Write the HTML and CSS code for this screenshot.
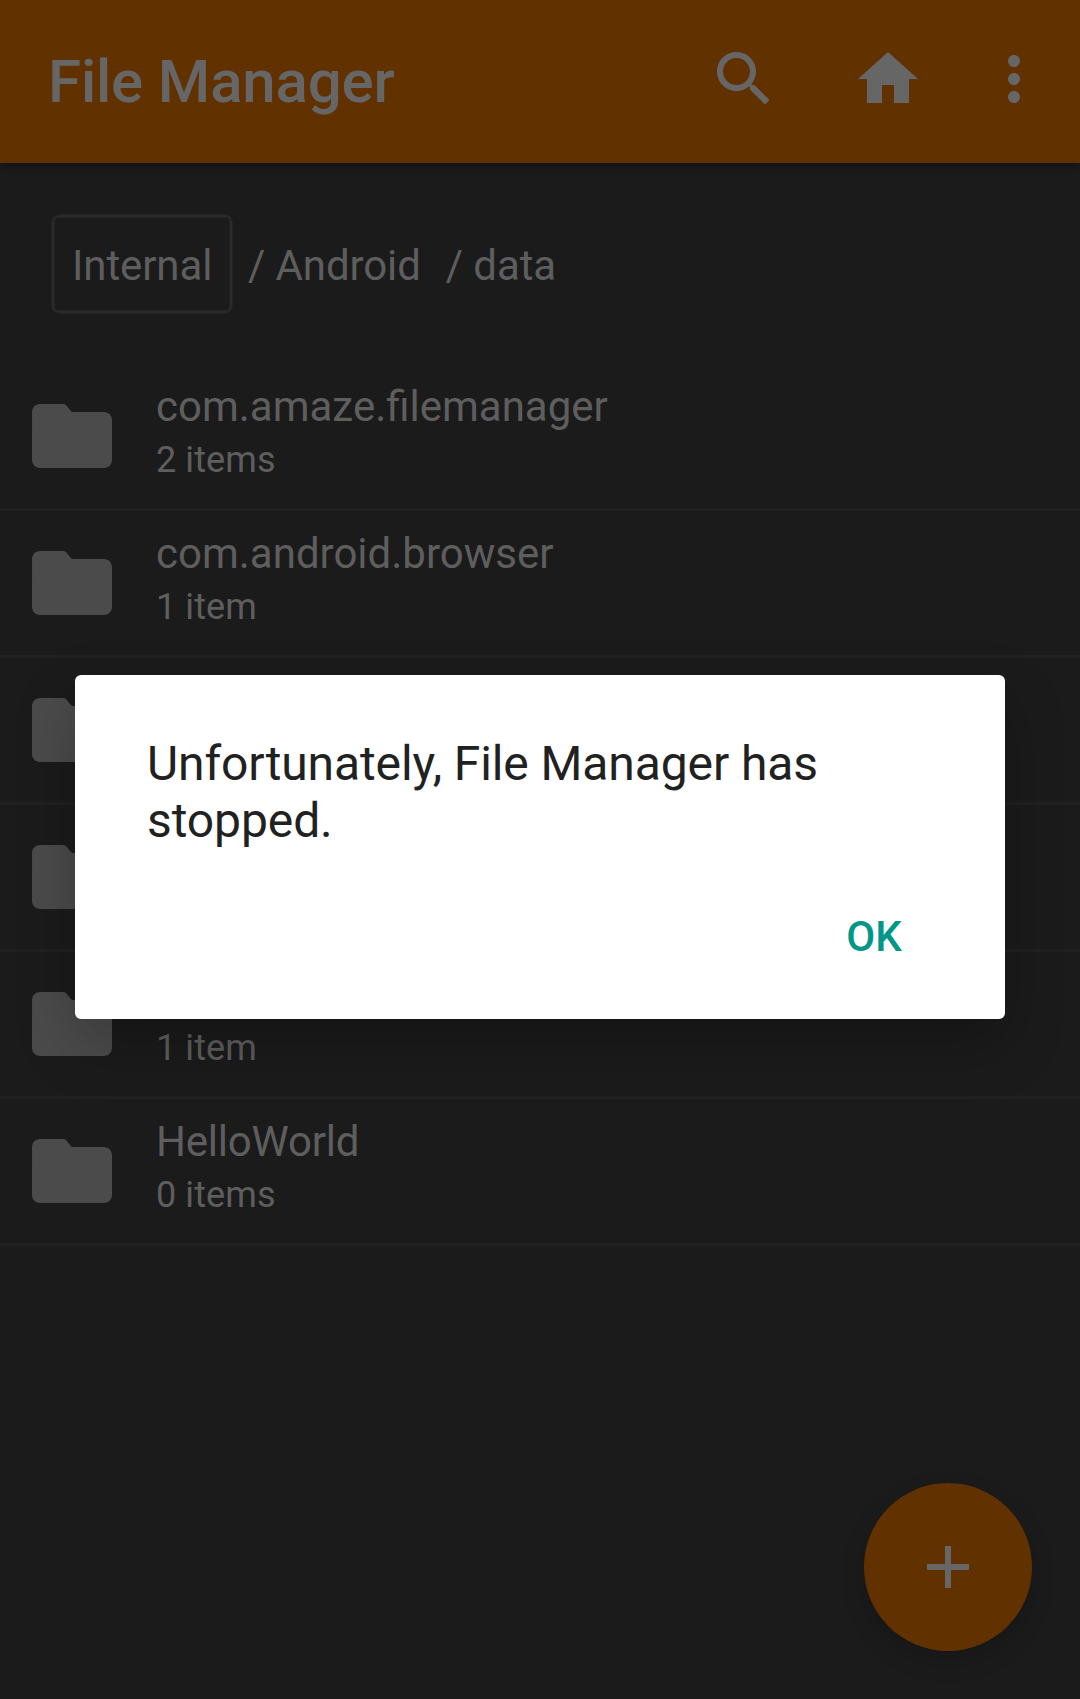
FILE: index.html
```html
<!DOCTYPE html>
<html lang="en">
<head>
<meta charset="utf-8">
<title>File Manager</title>
<link rel="stylesheet" href="styles.css">
</head>
<body>
<svg class="defs" aria-hidden="true">
  <symbol id="folder" viewBox="0 0 24 24"><path d="M10 4H4c-1.1 0-1.990.9-1.990 2L2 18c0 1.100.9 2 2 2h16c1.100 0 2-.9 2-2V8c0-1.100-.9-2-2-2h-8l-.5-.5L10.700 4.500Q10.300 4 10 4z"/></symbol>
</svg>
<div class="screen">
  <header class="toolbar">
    <h1 class="toolbar-title">File Manager</h1>
    <svg class="icon icon-search" viewBox="0 0 24 24"><path d="M15.500 14h-.79l-.28-.27C15.410 12.590 16 11.110 16 9.500 16 5.910 13.090 3 9.500 3S3 5.910 3 9.500 5.910 16 9.500 16c1.610 0 3.090-.59 4.230-1.570l.27.28v.79l5 4.990L20.490 19l-4.990-5zm-6 0C7.010 14 5 11.990 5 9.500S7.010 5 9.500 5 14 7.010 14 9.500 11.990 14 9.500 14z"/></svg>
    <svg class="icon icon-home" viewBox="0 0 24 24"><path d="M10 20v-6h4v6h5v-8h3L12 3 2 12h3v8z"/></svg>
    <svg class="icon" viewBox="0 0 24 24"><path d="M12 8c1.100 0 2-.9 2-2s-.9-2-2-2-2 .9-2 2 .9 2 2 2zm0 2c-1.100 0-2 .9-2 2s.9 2 2 2 2-.9 2-2-.9-2-2-2zm0 6c-1.100 0-2 .9-2 2s.9 2 2 2 2-.9 2-2-.9-2-2-2z"/></svg>
  </header>
  <nav class="path">
    <span class="path-root">Internal</span>
    <span class="path-part">/ Android</span>
    <span class="path-part">/ data</span>
  </nav>
  <ul class="files">
    <li class="file"><svg class="folder"><use href="#folder"/></svg><div><p class="name">com.amaze.filemanager</p><p class="count">2 items</p></div></li>
    <li class="file"><svg class="folder"><use href="#folder"/></svg><div><p class="name">com.android.browser</p><p class="count">1 item</p></div></li>
    <li class="file"><svg class="folder"><use href="#folder"/></svg></li>
    <li class="file"><svg class="folder"><use href="#folder"/></svg></li>
    <li class="file"><svg class="folder"><use href="#folder"/></svg><div><p class="name"></p><p class="count">1 item</p></div></li>
    <li class="file"><svg class="folder"><use href="#folder"/></svg><div><p class="name name-tight">HelloWorld</p><p class="count">0 items</p></div></li>
  </ul>
  <button class="fab" aria-label="Add"><svg class="icon" viewBox="0 0 24 24"><path d="M19 13h-6v6h-2v-6H5v-2h6V5h2v6h6v2z"/></svg></button>
  <section class="dialog" role="alertdialog">
    <p class="message">Unfortunately, File Manager has stopped.</p>
    <button class="ok">OK</button>
  </section>
</div>
</body>
</html>
```
FILE: styles.css
```css
* { box-sizing: border-box; }
body { margin: 0; background: #1b1b1b; font-family: Roboto, sans-serif; }
h1, p, ul { margin: 0; padding: 0; font-weight: 400; }
button { border: 0; padding: 0; font-family: inherit; background: none; }
.defs { display: none; }

.screen {
  position: relative;
  width: 1080px;
  height: 1699px;
  overflow: hidden;
  color: #5e5e5e;
}

.toolbar {
  display: flex;
  align-items: center;
  height: 163px;
  padding: 0 30px 5px 48px;
  background: #623100;
  color: #666;
  box-shadow: 0 3px 8px rgba(0, 0, 0, .35);
}
.toolbar-title {
  flex: 1;
  padding-top: 5px;
  font-size: 60px;
  font-weight: 500;
  line-height: 70px;
  letter-spacing: -.17px;
}
.icon { display: block; width: 72px; height: 72px; fill: #666; }
.icon-search { margin-right: 72px; }
.icon-home { margin-right: 54px; }

.path {
  display: flex;
  align-items: center;
  height: 201px;
  padding-left: 52px;
  font-size: 42px;
  line-height: 50px;
  letter-spacing: -.1px;
  white-space: nowrap;
}
.path-root {
  width: 180px;
  height: 98px;
  padding: 24px 0 0 18px;
  border: 2px solid #2b2b2b;
  border-radius: 7px;
  box-shadow: 0 0 1px 1px #232323, inset 0 0 1px 1px #232323;
}
.path-part { padding: 4px 0 0; margin-left: 16px; }
.path-part + .path-part { margin-left: 25px; }

.files { list-style: none; }
.file {
  display: flex;
  gap: 36px;
  height: 147px;
  padding: 24px 0 0 24px;
  border-bottom: 3px solid #212121;
}
.folder { width: 96px; height: 96px; fill: #4b4b4b; }
.name { height: 49px; margin-top: -6px; font-size: 42px; line-height: 49px; }
.name-tight { letter-spacing: -.2px; }
.count { font-size: 36px; line-height: 42px; margin-top: 8px; letter-spacing: .1px; }

.fab {
  position: absolute;
  left: 864px;
  top: 1483px;
  display: grid;
  place-items: center;
  width: 168px;
  height: 168px;
  border-radius: 50%;
  background: #623100;
  box-shadow: 0 10px 24px rgba(0, 0, 0, .16);
}

.dialog {
  position: absolute;
  left: 75px;
  top: 675px;
  display: flex;
  flex-direction: column;
  align-items: flex-end;
  width: 930px;
  height: 344px;
  padding: 60px 72px 0;
  border-radius: 6px;
  background: #fff;
  box-shadow: 0 24px 60px rgba(0, 0, 0, .24);
}
.message { width: 100%; color: #212121; font-size: 48px; line-height: 57px; letter-spacing: -.1px; }
.ok {
  width: 120px;
  margin: 63px -1px 0 0;
  color: #009688;
  font-size: 42px;
  font-weight: 500;
  line-height: 50px;
}
```
